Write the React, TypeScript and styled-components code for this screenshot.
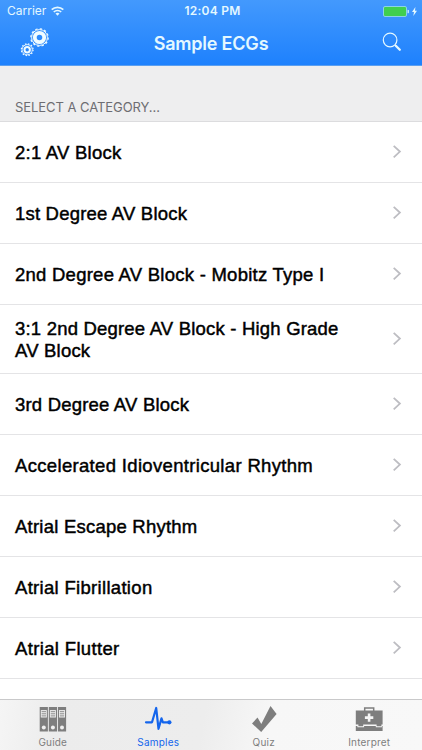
import React from "react";
import styled, { createGlobalStyle } from "styled-components";

const GlobalStyle = createGlobalStyle`
  * { box-sizing: border-box; }
  html, body, #root { height: 100%; }
  body { margin: 0; background: #fff; overflow: hidden; }
`;

const Screen = styled.main`
  width: 422px;
  height: 750px;
  display: flex;
  flex-direction: column;
  overflow: hidden;
  background: #fff;
  font-family: Inter, "Liberation Sans", sans-serif;
`;

const Header = styled.header`
  flex: none;
  height: 66px;
  background: linear-gradient(#4399fd, #1e81fd);
  border-bottom: 1px solid #5b9ff0;
  color: #fff;
`;

const StatusBar = styled.div`
  height: 22px;
  padding: 0 5px 0 7px;
  display: grid;
  grid-template-columns: 1fr auto 1fr;
  align-items: center;
  font-size: 12px;
  line-height: 22px;
`;

const StatusGroup = styled.div<{ $end?: boolean }>`
  display: flex;
  align-items: center;
  justify-content: ${(p) => (p.$end ? "flex-end" : "flex-start")};
  gap: ${(p) => (p.$end ? 3 : 5)}px;
  color: #e4f8ff;
`;

const Carrier = styled.span`
  letter-spacing: 0px;
`;

const Clock = styled.span`
  padding-left: 1px;
  font-weight: 600;
  font-size: 12px;
  letter-spacing: 0.25px;
  color: #e4f8ff;
`;

const NavBar = styled.div`
  height: 42px;
  padding: 0 20px;
  display: grid;
  grid-template-columns: 30px 1fr 30px;
  align-items: center;
`;

const Title = styled.h1`
  margin: 0;
  padding-top: 2px;
  text-align: center;
  font-size: 18px;
  line-height: 22px;
  font-weight: 600;
  letter-spacing: -0.2px;
  color: #e4f8ff;
`;

const NavButton = styled.button`
  width: 30px;
  height: 30px;
  padding: 0;
  border: 0;
  background: none;
  display: block;
  svg { display: block; }
`;

const SectionHeader = styled.h2`
  flex: none;
  margin: 0;
  height: 56px;
  padding: 32px 15px 0;
  background: #eeeeef;
  border-bottom: 1px solid #dcdcde;
  color: #6d6d72;
  font-size: 13px;
  line-height: 18px;
  font-weight: 400;
  letter-spacing: -0.06px;
`;

const List = styled.ul`
  flex: 1;
  min-height: 0;
  overflow: hidden;
  margin: 0;
  padding: 0;
  list-style: none;
`;

const Row = styled.li<{ $tall?: boolean }>`
  height: ${(p) => (p.$tall ? 69 : 61)}px;
  padding: 0 20px 0 15px;
  display: flex;
  align-items: center;
  justify-content: space-between;
  border-bottom: 1px solid #e4e4e6;
  svg { display: block; flex: none; }
`;

const RowLabel = styled.span<{ $track: number }>`
  max-width: 345px;
  padding-top: 1px;
  font-family: "Liberation Sans", Arial, sans-serif;
  font-size: 18.5px;
  line-height: 22px;
  letter-spacing: ${(p) => p.$track}px;
  color: #000;
  -webkit-text-stroke: 0.45px #000;
`;

const TabBar = styled.nav`
  flex: none;
  height: 51px;
  display: grid;
  grid-template-columns: repeat(4, 1fr);
  border-top: 1px solid #c9c9ca;
  background: linear-gradient(100deg, #f5f5f5 0%, #ececec 14%, #ededed 48%, #f7f7f7 64%, #f8f8f8 100%);
`;

const Tab = styled.div<{ $active?: boolean }>`
  display: flex;
  flex-direction: column;
  align-items: center;
  padding-top: 4px;
  color: ${(p) => (p.$active ? "#1465ec" : "#7e7e7e")};
  svg { display: block; }
`;

const TabLabel = styled.span`
  margin-top: 4px;
  font-size: 10px;
  line-height: 13px;
  letter-spacing: 0.2px;
`;

const rows = [
  { label: "2:1 AV Block", track: 0.24 },
  { label: "1st Degree AV Block", track: 0.2 },
  { label: "2nd Degree AV Block - Mobitz Type I", track: 0.25 },
  { label: "3:1 2nd Degree AV Block - High Grade AV Block", track: 0.2, tall: true },
  { label: "3rd Degree AV Block", track: 0.2 },
  { label: "Accelerated Idioventricular Rhythm", track: 0.33 },
  { label: "Atrial Escape Rhythm", track: 0.23 },
  { label: "Atrial Fibrillation", track: 0.31 },
  { label: "Atrial Flutter", track: 0.35 },
];

const Wifi = () => (
  <svg width="13" height="10" viewBox="0 0 13 10" fill="none" stroke="#e4f8ff" strokeWidth="1.7">
    <path d="M0.7 3.7a8.3 8.3 0 0 1 11.6 0" />
    <path d="M2.8 6a5.3 5.3 0 0 1 7.4 0" />
    <path d="M6.5 9.7 4.5 7.6a2.9 2.9 0 0 1 4 0z" fill="#e4f8ff" stroke="none" />
  </svg>
);

const Battery = () => (
  <svg width="26" height="11" viewBox="0 0 26 11">
    <rect x="0.5" y="0.5" width="23" height="10" rx="1.5" fill="#40cf50" stroke="#8bd3e8" />
    <path d="M24.5 3.7a1.8 1.8 0 0 1 0 3.6z" fill="#c0e7ff" />
  </svg>
);

const Bolt = () => (
  <svg width="5" height="9" viewBox="0 0 5 9">
    <path d="M3.4 0 0 5h2L1.3 9 5 3.7H3z" fill="#e4f8ff" />
  </svg>
);

const Gears = () => (
  <svg width="30" height="30" viewBox="0 0 30 30" fill="none" stroke="#f1fcff">
    <circle cx="19.5" cy="9.5" r="8.7" strokeWidth="1.2" strokeDasharray="2.3 2.255" />
    <circle cx="19.5" cy="9.5" r="7.9" strokeWidth="1" />
    <circle cx="19.5" cy="9.5" r="4.7" strokeWidth="3.8" />
    <circle cx="7.2" cy="21.7" r="5.9" strokeWidth="1.1" strokeDasharray="1.55 1.54" />
    <circle cx="7.2" cy="21.7" r="5.1" strokeWidth="0.9" />
    <circle cx="7.2" cy="21.7" r="2.7" strokeWidth="2" />
  </svg>
);

const Search = () => (
  <svg width="30" height="30" viewBox="0 0 30 30" fill="none" stroke="#e4f8ff">
    <circle cx="18.1" cy="12" r="6.8" strokeWidth="1.2" />
    <path d="m22.9 16.9 1.2 1" strokeWidth="1.3" />
    <path d="m23.8 17.8 4 4" strokeWidth="2.3" strokeLinecap="round" />
  </svg>
);

const Chevron = () => (
  <svg width="10" height="14" viewBox="0 0 10 14" fill="none" stroke="#bdbdc2" strokeWidth="1.8">
    <path d="M1.7 .8 7.9 6.6 1.7 12.4" />
  </svg>
);

const Binders = () => (
  <svg width="28" height="28" viewBox="0 0 28 28">
    {[0.7, 9.8, 18.9].map((x) => (
      <g key={x} transform={`translate(${x} 3)`}>
        <path d="M0 0h8.2v24.5H0z" fill="currentColor" />
        <path d="M1.1 3.1h6v7.4h-6z" fill="#efefef" />
        <path d="M1.9 4.7h4.4M1.9 6.8h4.4M1.9 8.9h4.4" stroke="currentColor" strokeWidth="0.9" />
        <circle cx="4.1" cy="20.4" r="2" fill="#efefef" />
      </g>
    ))}
  </svg>
);

const Pulse = () => (
  <svg width="28" height="28" viewBox="0 0 28 28" fill="none" stroke="currentColor" strokeWidth="2.2" strokeLinejoin="round" strokeLinecap="round">
    <path d="M2 18.3h6L12.2 4l2.3 20.8 3-10.4 1.4 3.9H25" />
    <circle cx="25.4" cy="18.3" r="2.1" fill="currentColor" stroke="none" />
  </svg>
);

const Check = () => (
  <svg width="28" height="28" viewBox="0 0 28 28">
    <path d="M2 19.4 7.5 13.6 11.3 20.1 20.5 2 26.6 10 11.2 28z" fill="currentColor" />
  </svg>
);

const MedicalCase = () => (
  <svg width="28" height="28" viewBox="0 0 28 28">
    <path d="M9.7 7V4h9v3" fill="none" stroke="currentColor" strokeWidth="1.5" />
    <path d="M.8 6.4h26.8v14.2h-1.2v1.7h-4.8v-1.7H8.2v1.7H3.4v-1.7H.8z" fill="currentColor" />
    <path d="M.8 21.9h1.6v1.3h6.7v-1.3h11.7v1.3h6.1v-1.3h.7V27H.8z" fill="currentColor" />
    <path d="M12.8 9.4h2.6v2.9h2.9v2.6h-2.9v2.9h-2.6v-2.9H9.9v-2.6h2.9z" fill="#f5f5f5" />
  </svg>
);

const tabs = [
  { label: "Guide", Icon: Binders },
  { label: "Samples", Icon: Pulse, active: true },
  { label: "Quiz", Icon: Check },
  { label: "Interpret", Icon: MedicalCase },
];

export default function App() {
  return (
    <>
      <GlobalStyle />
      <Screen>
        <Header>
          <StatusBar>
            <StatusGroup><Carrier>Carrier</Carrier><Wifi /></StatusGroup>
            <Clock>12:04 PM</Clock>
            <StatusGroup $end><Battery /><Bolt /></StatusGroup>
          </StatusBar>
          <NavBar>
            <NavButton aria-label="Settings"><Gears /></NavButton>
            <Title>Sample ECGs</Title>
            <NavButton aria-label="Search"><Search /></NavButton>
          </NavBar>
        </Header>
        <SectionHeader>SELECT A CATEGORY...</SectionHeader>
        <List>
          {rows.map((row) => (
            <Row key={row.label} $tall={row.tall}>
              <RowLabel $track={row.track}>{row.label}</RowLabel>
              <Chevron />
            </Row>
          ))}
        </List>
        <TabBar>
          {tabs.map(({ label, Icon, active }) => (
            <Tab key={label} $active={active}>
              <Icon />
              <TabLabel>{label}</TabLabel>
            </Tab>
          ))}
        </TabBar>
      </Screen>
    </>
  );
}
